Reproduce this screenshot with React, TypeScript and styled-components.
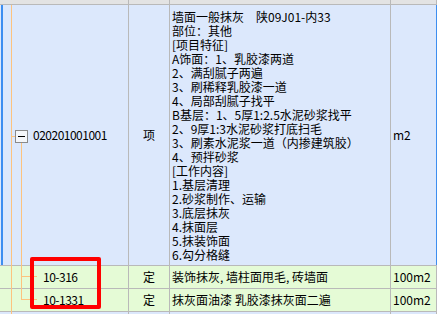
import React from "react";
import styled, { createGlobalStyle } from "styled-components";

const GlobalStyle = createGlobalStyle`
  html, body {
    margin: 0;
    padding: 0;
    background: #ffffff;
  }
  body {
    font-family: "Noto Sans CJK SC", "Liberation Sans", sans-serif;
    font-size: 12px;
    color: #000;
  }
`;

const Sheet = styled.div`
  position: relative;
  width: 437px;
  height: 314px;
  overflow: hidden;
  background: #dce8fc;
`;

const Row = styled.div<{ $height: number; $bg: string }>`
  display: grid;
  grid-template-columns: 129px 41px 221px 46px;
  height: ${(p) => p.$height}px;
  background: ${(p) => p.$bg};
  border-bottom: 1px solid #b9b9b9;
`;

const Cell = styled.div<{ $center?: boolean }>`
  position: relative;
  display: flex;
  align-items: center;
  justify-content: ${(p) => (p.$center ? "center" : "flex-start")};
  border-right: 1px solid #b9b9b9;
  padding-left: ${(p) => (p.$center ? 0 : 2)}px;
  white-space: nowrap;
  line-height: 14px;
`;

const SelectedEdge = styled.div<{ $side: "left" | "right" }>`
  position: absolute;
  top: 0;
  bottom: 0;
  ${(p) => p.$side}: ${(p) => (p.$side === "left" ? 1 : -1)}px;
  width: ${(p) => (p.$side === "left" ? 2 : 1)}px;
  background: #3d8ef0;
`;

const TreeLine = styled.span`
  position: absolute;
  background: #fdc37e;
`;

const Toggle = styled.span`
  position: absolute;
  left: 15px;
  top: 125px;
  width: 11px;
  height: 11px;
  border: 1px solid #8a8a8a;
  background: #f4f6fa;
  &::after {
    content: "";
    position: absolute;
    left: 2px;
    right: 2px;
    top: 5px;
    height: 1px;
    background: #000;
  }
`;

const Code = styled.span<{ $left: number }>`
  margin-left: ${(p) => p.$left}px;
  letter-spacing: -0.5px;
`;

const Desc = styled.div`
  display: flex;
  flex-direction: column;
  padding-top: 2px;
`;

const Highlight = styled.div`
  position: absolute;
  left: 30px;
  top: 257px;
  width: 63px;
  height: 44px;
  border: 4px solid #ff0000;
  border-radius: 2px;
`;

const lines = [
  "墙面一般抹灰　陕09J01-内33",
  "部位：其他",
  "[项目特征]",
  "A饰面：1、乳胶漆两道",
  "2、满刮腻子两遍",
  "3、刷稀释乳胶漆一道",
  "4、局部刮腻子找平",
  "B基层：1、5厚1:2.5水泥砂浆找平",
  "2、9厚1:3水泥砂浆打底扫毛",
  "3、刷素水泥浆一道（内掺建筑胶）",
  "4、预拌砂浆",
  "[工作内容]",
  "1.基层清理",
  "2.砂浆制作、运输",
  "3.底层抹灰",
  "4.抹面层",
  "5.抹装饰面",
  "6.勾分格缝",
];

const subItems = [
  { code: "10-316", name: "装饰抹灰, 墙柱面甩毛, 砖墙面", unit: "100m2" },
  { code: "10-1331", name: "抹灰面油漆 乳胶漆抹灰面二遍", unit: "100m2" },
];

export default function App() {
  return (
    <>
      <GlobalStyle />
      <Sheet>
        <Row $height={4} $bg="#e3e3e3">
          <Cell />
          <Cell />
          <Cell />
          <Cell />
        </Row>
        <Row $height={260} $bg="#dce8fc">
          <Cell>
            <SelectedEdge $side="left" />
            <TreeLine style={{ left: 11, top: 0, width: 1, bottom: -1 }} />
            <TreeLine style={{ left: 11, top: 131, width: 4, height: 1 }} />
            <TreeLine style={{ left: 21, top: 137, width: 1, bottom: -1 }} />
            <Toggle />
            <Code $left={31}>020201001001</Code>
          </Cell>
          <Cell $center>项</Cell>
          <Cell>
            <Desc>
              {lines.map((l) => (
                <span key={l}>{l}</span>
              ))}
            </Desc>
          </Cell>
          <Cell>
            <SelectedEdge $side="right" />
            m2
          </Cell>
        </Row>
        {subItems.map((it, i) => (
          <Row key={it.code} $height={22} $bg="#e5fbd6">
            <Cell>
              <TreeLine style={{ left: 11, top: -1, width: 1, bottom: -1 }} />
              <TreeLine
                style={{ left: 21, top: -1, width: 1, height: i === 0 ? 24 : 11 }}
              />
              <TreeLine style={{ left: 21, top: 10, width: 16, height: 1 }} />
              <Code $left={41}>{it.code}</Code>
            </Cell>
            <Cell $center>定</Cell>
            <Cell>{it.name}</Cell>
            <Cell>{it.unit}</Cell>
          </Row>
        ))}
        <Row $height={22} $bg="#dce8fc">
          <Cell>
            <TreeLine style={{ left: 11, top: 0, width: 1, bottom: 0 }} />
          </Cell>
          <Cell />
          <Cell />
          <Cell />
        </Row>
        <Highlight />
      </Sheet>
    </>
  );
}
